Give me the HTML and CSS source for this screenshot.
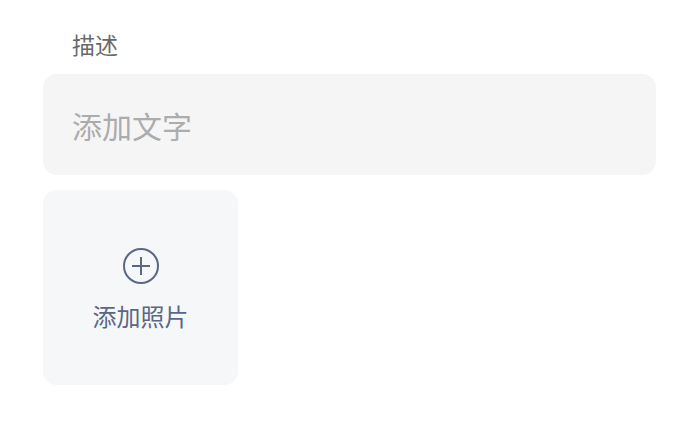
FILE: index.html
```html
<!DOCTYPE html>
<html lang="zh-CN">
<head>
    <meta charset="UTF-8">
    <meta name="viewport" content="width=device-width, initial-scale=1.0">
    <title>描述</title>
    <link rel="stylesheet" href="styles.css">
</head>
<body>
    <div class="form">
        <div class="label">描述</div>
        <div class="desc-input">添加文字</div>
        <div class="photo-add">
            <svg class="plus-icon" width="38" height="38" viewBox="0 0 38 38">
                <circle cx="19" cy="19" r="17" fill="none" stroke="#5a6787" stroke-width="2"/>
                <line x1="19" y1="10" x2="19" y2="28" stroke="#5a6787" stroke-width="2"/>
                <line x1="10" y1="19" x2="28" y2="19" stroke="#5a6787" stroke-width="2"/>
            </svg>
            <span class="photo-text">添加照片</span>
        </div>
    </div>
</body>
</html>
```

FILE: styles.css
```css
body, html {
    margin: 0;
    padding: 0;
    background-color: #ffffff;
    font-family: 'Noto Sans CJK SC', 'Noto Sans', sans-serif;
}
.form {
    padding: 30px 44px 0 43px;
    display: flex;
    flex-direction: column;
}
.label {
    margin-left: 29px;
    font-size: 23px;
    line-height: 28px;
    color: #6a6a6a;
}
.desc-input {
    margin-top: 16px;
    height: 101px;
    box-sizing: border-box;
    padding-left: 29px;
    display: flex;
    align-items: center;
    background-color: #f5f5f5;
    border-radius: 14px;
    font-size: 30px;
    color: #acacac;
}
.photo-add {
    margin-top: 15px;
    width: 195px;
    height: 195px;
    background-color: #f6f7f9;
    border-radius: 14px;
    display: flex;
    flex-direction: column;
    align-items: center;
    justify-content: center;
}
.plus-icon {
    margin-top: 2px;
}
.photo-text {
    margin-top: 17px;
    font-size: 24px;
    line-height: 28px;
    color: #5a6787;
}
```
